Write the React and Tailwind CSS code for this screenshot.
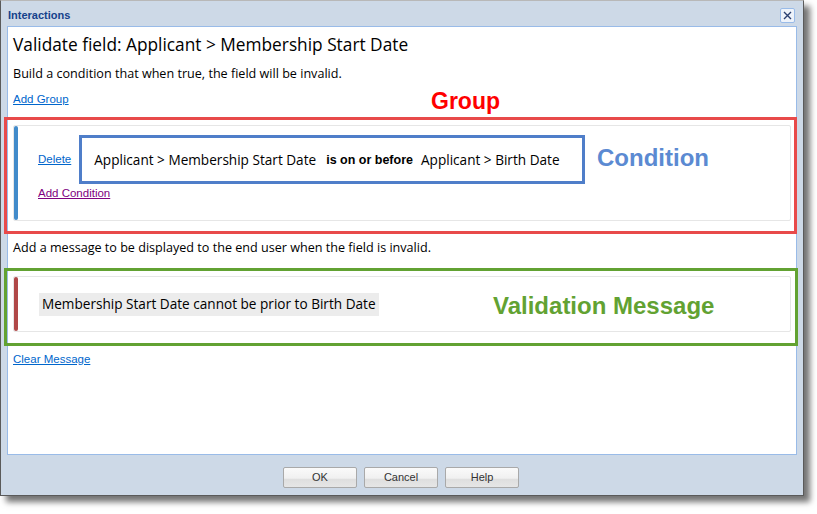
import React from 'react'

const sans = { fontFamily: '"Liberation Sans", Arial, sans-serif' }
const open = { fontFamily: '"Open Sans", "Liberation Sans", sans-serif' }

function LinkText({ children, purple }) {
  return (
    <span className={`text-[11.5px] underline cursor-pointer ${purple ? 'text-[#800080]' : 'text-[#0066cc]'}`} style={sans}>
      {children}
    </span>
  )
}

function Button({ children }) {
  return (
    <button className="w-[74px] h-[21px] rounded-[2px] border border-[#a9a9a9] bg-[linear-gradient(#fafafa_0%,#f0f0f0_55%,#dedede_56%,#e6e6e6_100%)] text-[11px] text-[#333]">
      {children}
    </button>
  )
}

export default function App() {
  return (
    <div className="w-[817px] h-[514px] bg-white relative" style={sans}>
      <div className="relative w-[804px] h-[496px] border border-[#5a5a5a] border-t-[#b8b8b8] bg-[#cdd9e7] shadow-[6px_6px_6px_rgba(0,0,0,0.55)] flex flex-col">
        {/* title bar */}
        <div className="h-[25px] flex items-center justify-between pl-[7px] pr-[8px] pt-[3px]">
          <span className="text-[11px] font-bold text-[#15428b]">Interactions</span>
          <div className="w-[15px] h-[15px] border border-[#99bbe8] rounded-[2px] bg-[#eef3fa] flex items-center justify-center">
            <svg width="9" height="9" viewBox="0 0 9 9">
              <path d="M1 1 L8 8 M8 1 L1 8" stroke="#2a3f70" strokeWidth="1.4" />
            </svg>
          </div>
        </div>

        {/* content panel */}
        <div className="mx-[6px] h-[429px] bg-white border border-[#99bbe8] px-[5px] text-black" style={open}>
          <div className="pt-[7px] text-[17.3px] leading-[22px]">Validate field: Applicant &gt; Membership Start Date</div>
          <div className="mt-[10px] text-[12.6px] leading-[16px]">Build a condition that when true, the field will be invalid.</div>
          <div className="mt-[7px] leading-[16px]"><LinkText>Add Group</LinkText></div>

          {/* group card */}
          <div className="mt-[18px] h-[96px] border border-[#e6e6e6] rounded-[2px] flex">
            <div className="w-[4px] bg-[#428bca] rounded-[2px]"></div>
            <div className="flex-1 pl-[20px] pt-[25px]">
              <div className="flex items-center h-[18px]">
                <LinkText>Delete</LinkText>
                <div className="ml-[23px] flex items-center text-[13.6px]">
                  <span>Applicant &gt; Membership Start Date</span>
                  <span className="ml-[10px] text-[12.5px] font-bold" style={sans}>is on or before</span>
                  <span className="ml-[8px]">Applicant &gt; Birth Date</span>
                </div>
              </div>
              <div className="mt-[14px] leading-[16px]"><LinkText purple>Add Condition</LinkText></div>
            </div>
          </div>

          <div className="mt-[19px] text-[12.6px] leading-[16px]">Add a message to be displayed to the end user when the field is invalid.</div>

          {/* message card */}
          <div className="mt-[20px] h-[56px] border border-[#e6e6e6] rounded-[2px] flex">
            <div className="w-[4px] bg-[#b04848] rounded-[2px]"></div>
            <div className="flex-1 pl-[21px] flex items-center">
              <span className="bg-[#ececec] px-[3px] h-[23px] flex items-center text-[13.6px]">Membership Start Date cannot be prior to Birth Date</span>
            </div>
          </div>

          <div className="mt-[17px] leading-[16px]"><LinkText>Clear Message</LinkText></div>
        </div>

        {/* footer */}
        <div className="flex-1 flex justify-center items-start pt-[12px] gap-[7px] pr-[2px]">
          <Button>OK</Button>
          <Button>Cancel</Button>
          <Button>Help</Button>
        </div>

        {/* annotations */}
        <div className="absolute left-[430px] top-[86px] text-[23px] font-bold text-[#ff0000] leading-[28px]">Group</div>
        <div className="absolute left-[3px] top-[116px] w-[793px] h-[117px] border-[3px] border-[#e84a4a]"></div>
        <div className="absolute left-[78px] top-[134px] w-[506px] h-[49px] border-[3px] border-[#4f7ec9]"></div>
        <div className="absolute left-[596px] top-[143px] text-[24px] font-bold text-[#5b8ad2] leading-[28px]">Condition</div>
        <div className="absolute left-[3px] top-[267px] w-[794px] h-[78px] border-[3px] border-[#62a232]"></div>
        <div className="absolute left-[492px] top-[291px] text-[24px] font-bold text-[#62a232] leading-[28px]">Validation Message</div>
      </div>
    </div>
  )
}
